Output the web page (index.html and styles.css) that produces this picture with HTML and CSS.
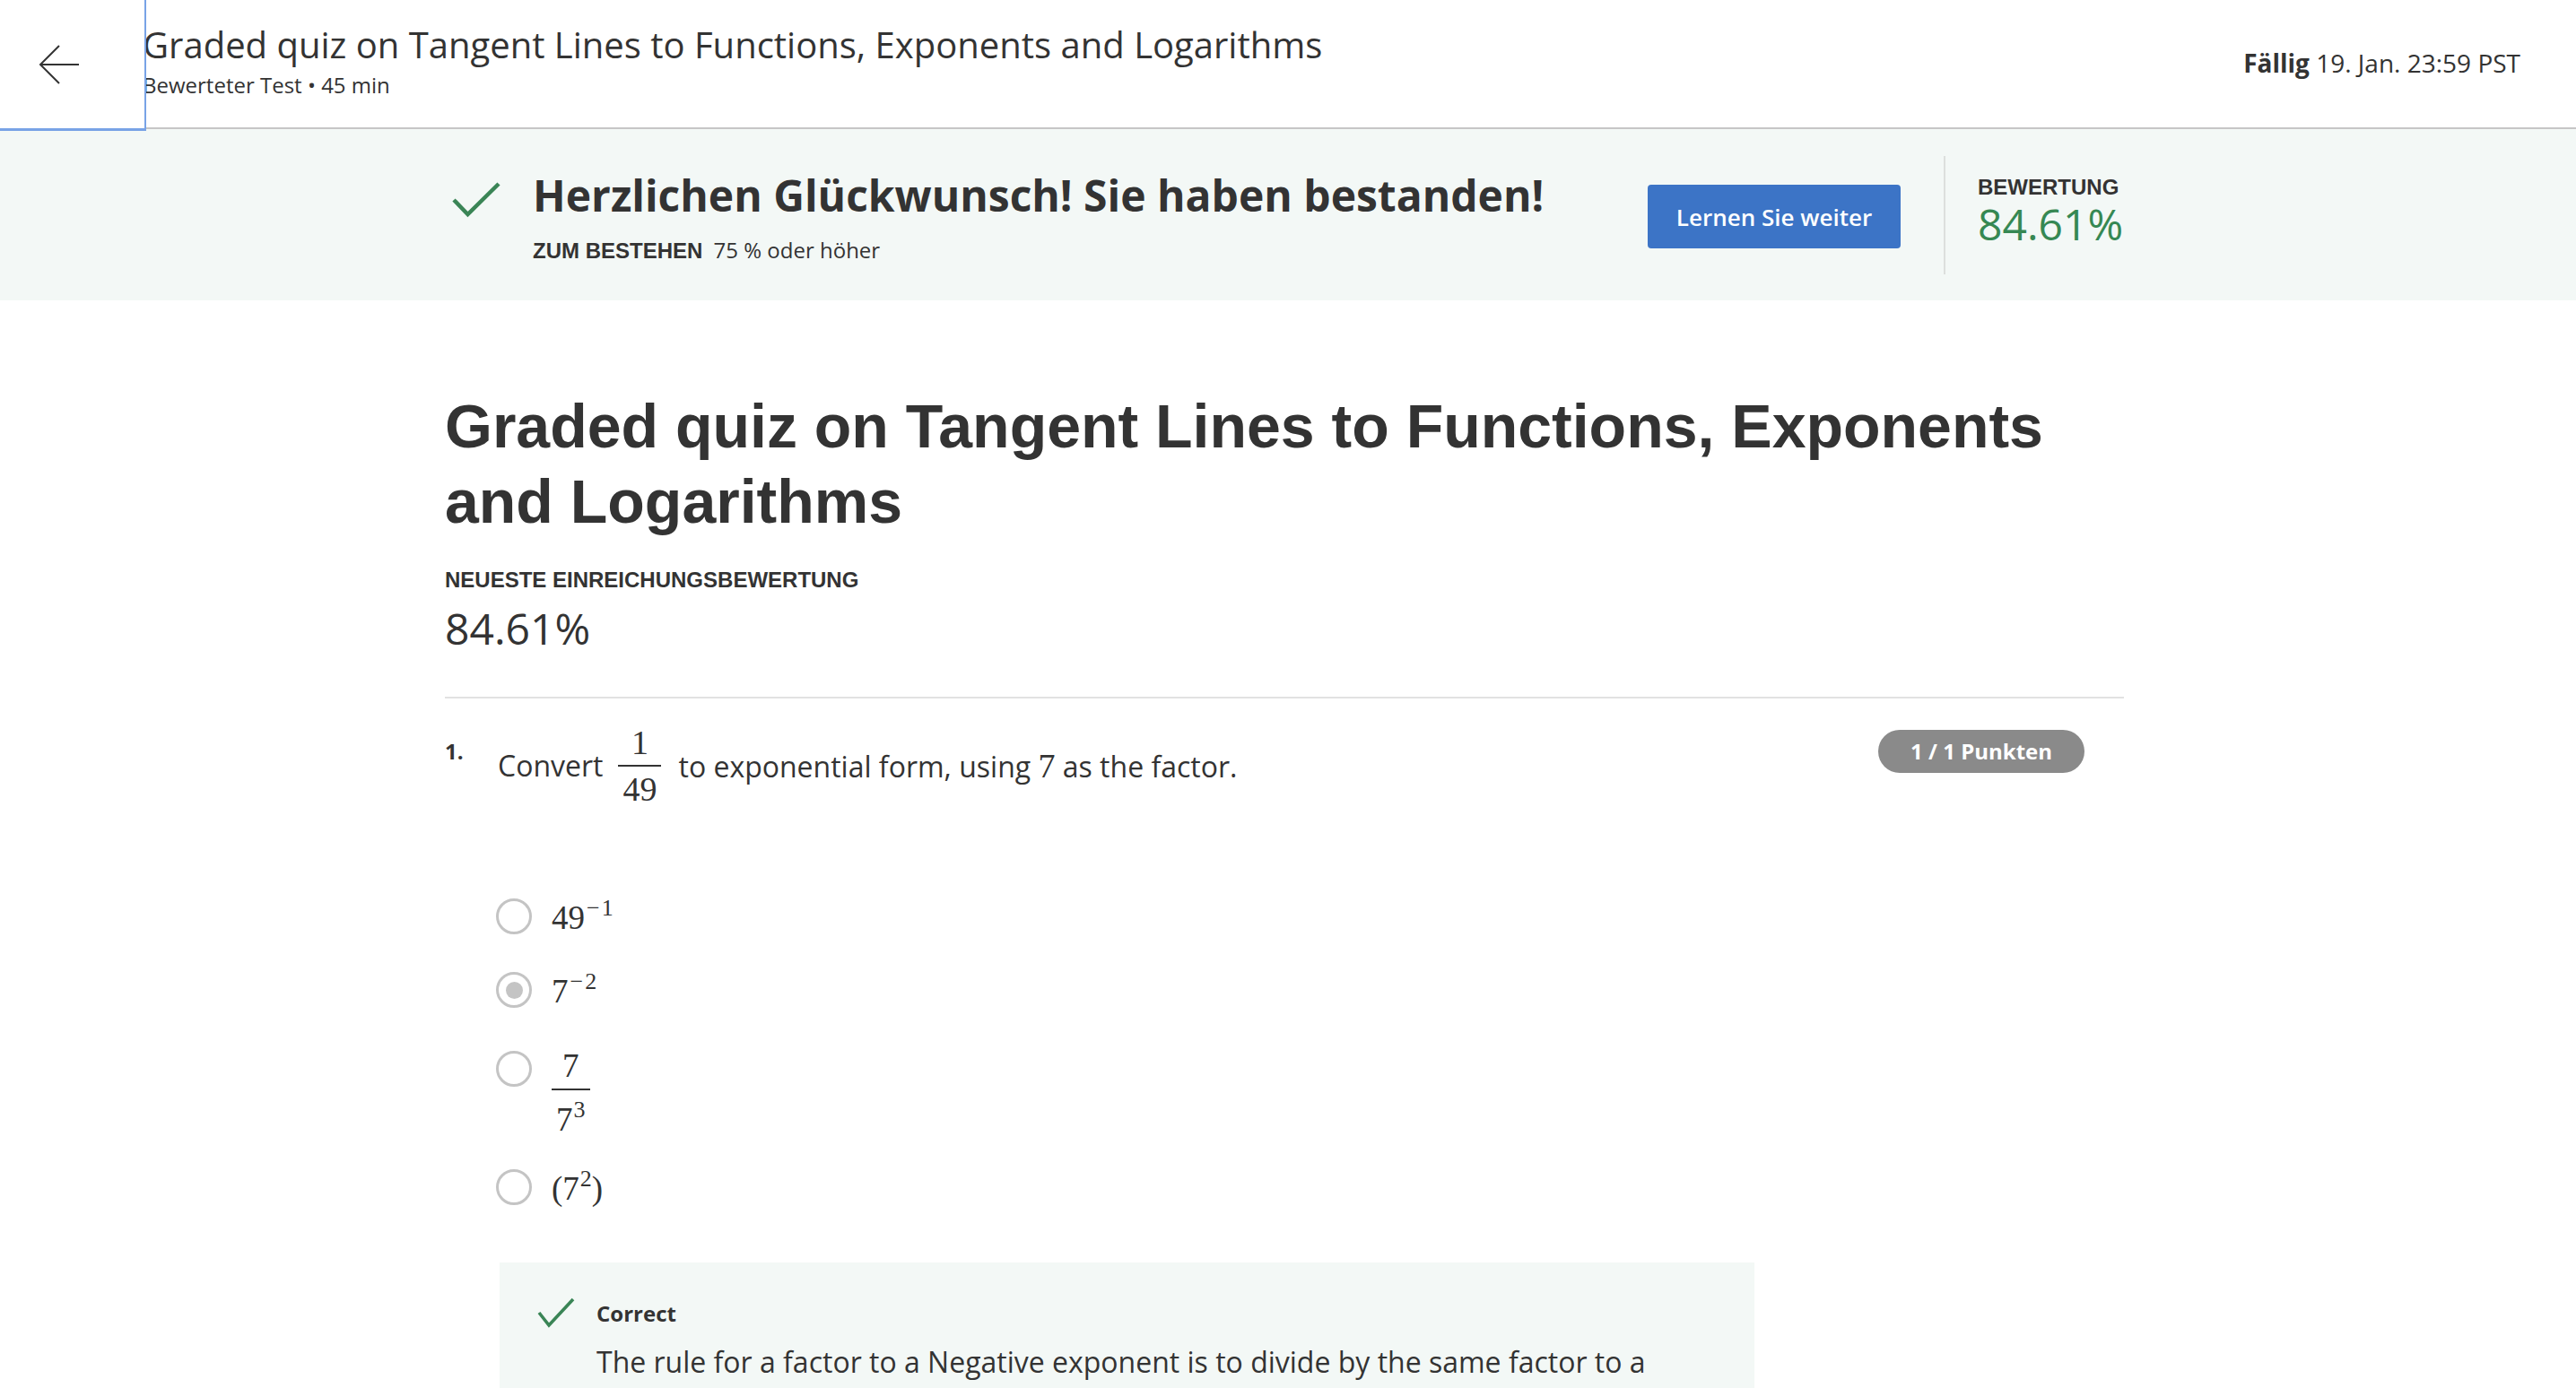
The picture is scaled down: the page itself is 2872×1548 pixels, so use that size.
FILE: index.html
```html
<!DOCTYPE html>
<html lang="de">
<head>
<meta charset="utf-8">
<title>Graded quiz</title>
<link rel="stylesheet" href="styles.css">
</head>
<body>
<header class="topbar">
  <button class="back" aria-label="Zurück">
    <svg width="46" height="46" viewBox="0 0 46 46" fill="none" stroke="#333" stroke-width="2">
      <path d="M45 23H2M23 2L2 23L23 44"/>
    </svg>
  </button>
  <div class="top-title">
    <div class="top-name">Graded quiz on Tangent Lines to Functions, Exponents and Logarithms</div>
    <div class="top-sub">Bewerteter Test • 45 min</div>
  </div>
  <div class="due"><b>Fällig</b> 19. Jan. 23:59 PST</div>
</header>

<section class="banner">
  <div class="banner-inner">
    <div class="pass">
      <svg class="pass-check" width="54" height="42" viewBox="0 0 54 42" fill="none" stroke="#3a8556" stroke-width="4.5">
        <path d="M2 20L17.5 36L52 2"/>
      </svg>
      <div class="pass-text">
        <h2 class="pass-title">Herzlichen Glückwunsch! Sie haben bestanden!</h2>
        <div class="pass-req"><span class="caps">ZUM BESTEHEN</span> 75 % oder höher</div>
      </div>
    </div>
    <button class="continue">Lernen Sie weiter</button>
    <div class="divider"></div>
    <div class="score">
      <div class="caps">BEWERTUNG</div>
      <div class="score-val">84.61%</div>
    </div>
  </div>
</section>

<main class="content">
  <h1 class="quiz-title">Graded quiz on Tangent Lines to Functions, Exponents and Logarithms</h1>
  <div class="caps latest-label">NEUESTE EINREICHUNGSBEWERTUNG</div>
  <div class="latest-score">84.61%</div>
  <div class="rule"></div>

  <div class="question">
    <div class="qhead">
      <span class="qnum">1.</span>
      <div class="qtext">
        <span>Convert</span>
        <span class="frac qfrac"><span class="num">1</span><span class="den">49</span></span>
        <span>to exponential form, using <span class="mi">7</span> as the factor.</span>
      </div>
      <span class="badge">1 / 1 Punkten</span>
    </div>

    <div class="options">
      <div class="opt">
        <span class="radio"></span>
        <span class="math">49<sup><span class="minus">−</span>1</sup></span>
      </div>
      <div class="opt">
        <span class="radio checked"></span>
        <span class="math">7<sup><span class="minus">−</span>2</sup></span>
      </div>
      <div class="opt opt-frac">
        <span class="radio"></span>
        <span class="frac ofrac"><span class="num">7</span><span class="den">7<sup>3</sup></span></span>
      </div>
      <div class="opt">
        <span class="radio"></span>
        <span class="math">(7<sup>2</sup>)</span>
      </div>
    </div>

    <div class="feedback">
      <svg class="fb-check" width="42" height="34" viewBox="0 0 42 34" fill="none" stroke="#3a8556" stroke-width="3.6">
        <path d="M2 17L13 31L40 2"/>
      </svg>
      <div class="fb-body">
        <div class="fb-title">Correct</div>
        <p class="fb-text">The rule for a factor to a Negative exponent is to divide by the same factor to a positive exponent.</p>
      </div>
    </div>
  </div>
</main>
</body>
</html>
```

FILE: styles.css
```css
* { box-sizing: border-box; }
html, body { margin: 0; padding: 0; background: #fff; }
body {
  font-family: "Open Sans", "Liberation Sans", sans-serif;
  color: #333;
  overflow: hidden;
}

/* top bar */
.topbar {
  display: flex;
  align-items: flex-start;
  height: 144px;
  border-bottom: 2px solid #c6c6c6;
  background: #fff;
}
.back {
  position: relative;
  z-index: 2;
  flex: 0 0 163px;
  height: 146px;
  padding: 0 0 0 43px;
  margin: 0;
  display: flex;
  align-items: center;
  background: #fff;
  border: 0;
  border-right: 2px solid #78a3e6;
  border-bottom: 3px solid #78a3e6;
}
.back svg { display: block; }
.top-title {
  flex: 1;
  margin-left: -4px;
  padding-top: 26px;
}
.top-name {
  font-size: 40px;
  line-height: 48px;
  white-space: nowrap;
}
.top-sub {
  margin-top: 5px;
  font-size: 24px;
  line-height: 32px;
}
.due {
  padding: 51px 62px 0 0;
  font-size: 28px;
  line-height: 38px;
  white-space: nowrap;
}
.due b { font-weight: 700; }

/* banner */
.banner {
  background: #f3f8f6;
  height: 191px;
}
.banner-inner {
  width: 1872px;
  height: 100%;
  margin-left: calc(50% - 940px);
  display: flex;
  align-items: center;
}
.pass {
  flex: 1;
  display: flex;
  align-items: flex-start;
}
.pass-check {
  margin: 19px 36px 0 8px;
  flex: none;
}
.pass-text { padding-top: 4px; }
.pass-title {
  margin: 0;
  font-size: 48px;
  line-height: 60px;
  font-weight: 700;
  white-space: nowrap;
}
.pass-req {
  margin-top: 16px;
  font-size: 24px;
  line-height: 30px;
}
.caps {
  font-family: "Liberation Sans", Arial, sans-serif;
  font-weight: 700;
  font-size: 24px;
  color: #333;
}
.pass-req .caps { margin-right: 6px; }
.continue {
  flex: none;
  width: 282px;
  height: 71px;
  margin: 4px 0 0 0;
  border: 0;
  border-radius: 4px;
  background: #3c74c6;
  color: #fff;
  font-family: "Open Sans", sans-serif;
  font-size: 26px;
  font-weight: 600;
}
.divider {
  flex: none;
  width: 2px;
  height: 132px;
  margin: 0 36px 0 48px;
  background: #dcdfdd;
}
.score {
  flex: none;
  width: 163px;
  margin-bottom: 6px;
}
.score .caps { line-height: 26px; }
.score-val {
  font-size: 48px;
  line-height: 56px;
  color: #368853;
  white-space: nowrap;
}

/* main */
.content {
  width: 1872px;
  margin-left: calc(50% - 940px);
  padding-top: 98px;
}
.quiz-title {
  margin: 0;
  font-family: "Liberation Sans", Arial, sans-serif;
  font-weight: 700;
  font-size: 68px;
  line-height: 84px;
  color: #333;
}
.latest-label {
  margin-top: 33px;
  line-height: 26px;
}
.latest-score {
  margin-top: 13px;
  font-size: 48px;
  line-height: 56px;
}
.rule {
  margin-top: 48px;
  height: 2px;
  background: #e2e2e2;
}

.qhead {
  display: flex;
  align-items: flex-start;
  margin-top: 24px;
}
.qnum {
  flex: 0 0 59px;
  margin-top: 11px;
  font-size: 24px;
  line-height: 48px;
  font-weight: 700;
}
.qtext {
  flex: 1;
  display: flex;
  align-items: center;
  font-size: 32px;
  line-height: 44px;
}
.mi {
  font-family: "Liberation Serif", "DejaVu Serif", serif;
  font-size: 38px;
}
.frac {
  display: inline-flex;
  flex-direction: column;
  align-items: center;
  font-family: "Liberation Serif", "DejaVu Serif", serif;
  font-size: 37px;
}
.frac .num { padding: 0 4px; }
.frac .den {
  align-self: stretch;
  text-align: center;
  border-top: 2px solid #333;
  padding: 0 5px;
}
.qfrac { margin: 0 19px 0 17px; font-size: 38px; }
.qfrac .num { line-height: 50px; }
.qfrac .den { line-height: 50px; }
.badge {
  flex: none;
  margin: 11px 44px 0 0;
  height: 48px;
  padding: 0 36px;
  border-radius: 24px;
  background: #8a8a8a;
  color: #fff;
  font-size: 24px;
  line-height: 48px;
  font-weight: 700;
}

.options {
  margin: 95px 0 0 57px;
}
.opt {
  display: flex;
  align-items: flex-start;
  gap: 22px;
  margin-bottom: 34px;
}
.radio {
  flex: none;
  width: 40px;
  height: 40px;
  margin-top: 2px;
  border: 3.5px solid #c4c4c4;
  border-radius: 50%;
  display: flex;
  align-items: center;
  justify-content: center;
}
.radio.checked::after {
  content: "";
  width: 19px;
  height: 19px;
  border-radius: 50%;
  background: #c4c4c4;
}
.math {
  font-family: "Liberation Serif", "DejaVu Serif", serif;
  font-size: 37px;
  line-height: 48px;
  color: #333;
}
.math sup, .frac sup {
  font-size: 26px;
  line-height: 1;
  vertical-align: 0;
  position: relative;
  top: -15px;
  margin-left: 1px;
}
.minus { margin: 0 2px 0 1px; }
.opt-frac .radio { margin-top: 8px; }
.ofrac { margin-bottom: -6px; }
.ofrac .num { line-height: 50px; }
.ofrac .den { line-height: 50px; padding-top: 8px; }

.feedback {
  margin: 58px 0 0 61px;
  width: 1399px;
  background: #f3f8f6;
  padding: 39px 42px 40px 42px;
  display: flex;
  align-items: flex-start;
  gap: 24px;
}
.fb-check { flex: none; }
.fb-body { flex: 1; padding-top: 3px; }
.fb-title {
  font-size: 24px;
  line-height: 30px;
  font-weight: 700;
}
.fb-text {
  margin: 17px 0 0 0;
  font-size: 32px;
  line-height: 44px;
}
```
